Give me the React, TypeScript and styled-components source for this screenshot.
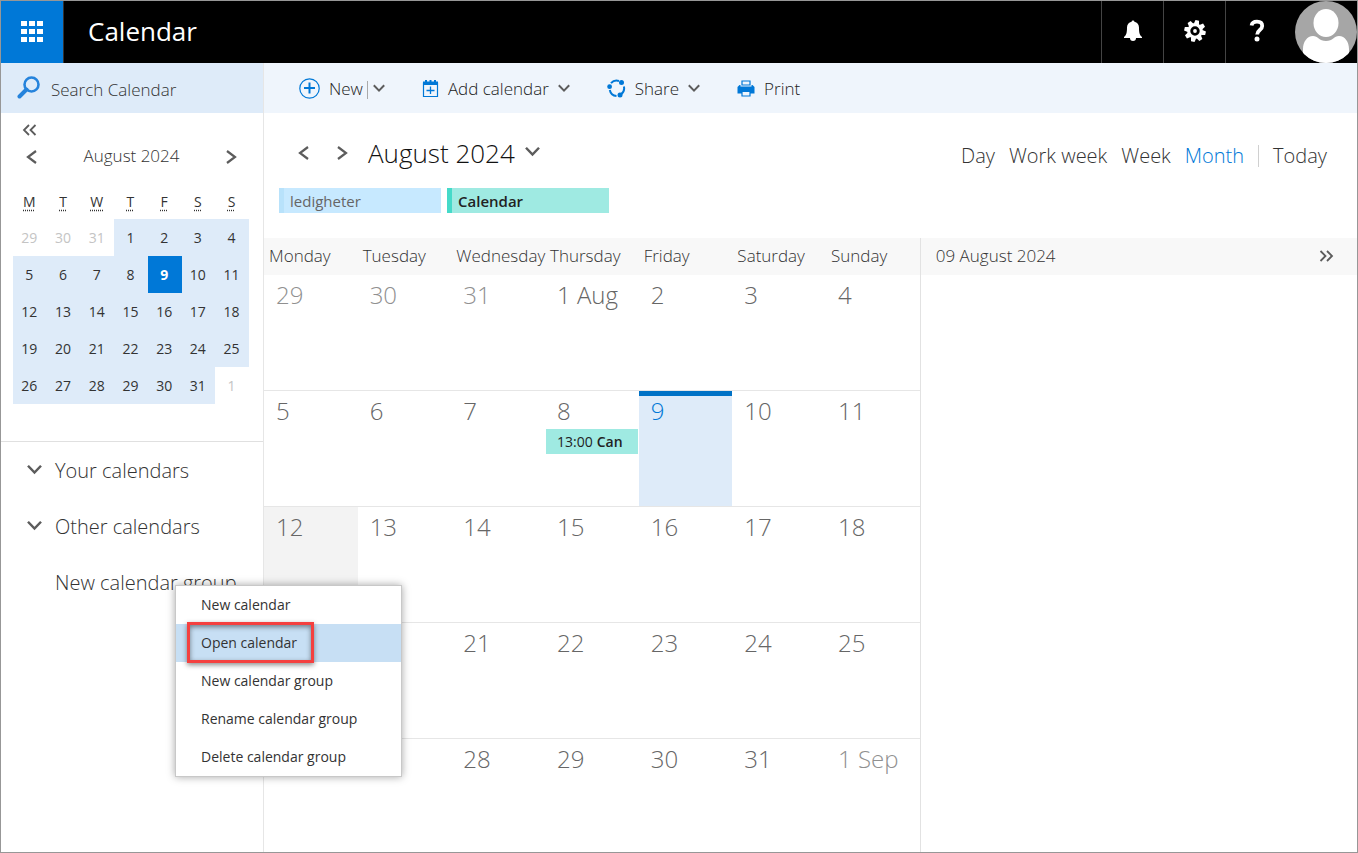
import React from 'react';
import styled, { createGlobalStyle } from 'styled-components';

const GlobalStyle = createGlobalStyle`
  *, *::before, *::after { box-sizing: border-box; }
  body {
    margin: 0;
    background: #fff;
    color: #333;
    font-family: "Open Sans", "Noto Sans", sans-serif;
    font-size: 17px;
    font-weight: 300;
  }
  button, input { font: inherit; color: inherit; }
  svg { display: block; flex: none; }
`;

const Button = styled.button`
  display: flex;
  align-items: center;
  padding: 0;
  border: 0;
  background: none;
  cursor: pointer;
  white-space: nowrap;
`;

const Page = styled.div`
  display: flex;
  flex-direction: column;
  min-height: 100vh;
  border: 1px solid #979797;
`;

/* ---------- top bar ---------- */

const TopBar = styled.header`
  display: flex;
  align-items: center;
  height: 62px;
  background: #000;
  color: #fff;
`;

const Launcher = styled(Button)`
  justify-content: center;
  width: 63px;
  height: 100%;
  padding-bottom: 1px;
  background: #0078d7;
  border-right: 1px solid #333;
`;

const AppTitle = styled.h1`
  flex: 1;
  margin: 0;
  padding: 0 0 2px 24px;
  font-size: 26px;
  font-weight: 400;
  line-height: 58px;
`;

const TopAction = styled(Button)`
  justify-content: center;
  width: 62px;
  height: 100%;
  padding-bottom: 2px;
  border-left: 1px solid #444;
`;

const Avatar = styled(Button)`
  margin-left: 8px;
`;

/* ---------- page body ---------- */

const Body = styled.div`
  display: flex;
  flex: 1;
`;

const Sidebar = styled.aside`
  display: flex;
  flex-direction: column;
  flex: none;
  width: 263px;
  border-right: 1px solid #e6e6e6;
`;

const SearchBox = styled.label`
  display: flex;
  align-items: center;
  gap: 10px;
  height: 50px;
  padding: 0 16px;
  background: #deebf9;
`;

const SearchInput = styled.input`
  flex: 1;
  min-width: 0;
  height: 30px;
  padding: 2px 0 0;
  border: 0;
  outline: 0;
  background: none;
  &::placeholder { color: #333; opacity: 1; }
`;

const CollapseRow = styled.div`
  display: flex;
  height: 30px;
  padding: 4px 0 0 21px;
`;

const MiniHeader = styled.div`
  display: flex;
  align-items: center;
  justify-content: space-between;
  height: 28px;
  margin-bottom: 14px;
  padding: 0 26px 0 25px;
  line-height: 24px;
  span { padding-bottom: 2px; }
`;

const MiniMonth = styled.div`
  padding: 0 14px 37px 12px;
  border-bottom: 1px solid #e0e0e0;
`;

const MiniTable = styled.table`
  width: 100%;
  table-layout: fixed;
  border-spacing: 0;
  text-align: center;
  font-size: 14px;
`;

const MiniWeekday = styled.th`
  height: 34px;
  padding: 0 1px 2px 0;
  font-weight: 400;
  abbr { text-decoration: underline dotted; text-underline-offset: 3px; }
`;

type MiniKind = 'in' | 'out' | 'today';

const MiniDay = styled.td<{ $kind: MiniKind }>`
  height: 37px;
  padding: 0 1px 1px 0;
  font-weight: ${p => (p.$kind === 'today' ? 700 : 400)};
  color: ${p => ({ in: '#333', out: '#c4c4c4', today: '#fff' })[p.$kind]};
  background: ${p => ({ in: '#deebf9', out: 'none', today: '#0078d7' })[p.$kind]};
`;

const GroupList = styled.ul`
  margin: 0;
  padding: 0;
  list-style: none;
`;

const GroupItem = styled.li`
  position: relative;
`;

const GroupButton = styled(Button)`
  gap: 13px;
  width: 100%;
  height: 56px;
  padding-left: 26px;
  font-size: 20px;
`;

const ChevronSlot = styled.span`
  width: 15px;
`;

/* ---------- context menu ---------- */

const Menu = styled.ul`
  position: absolute;
  z-index: 2;
  top: 31px;
  left: 174px;
  width: 227px;
  margin: 0;
  padding: 0;
  list-style: none;
  background: #fff;
  border: 1px solid #c8c8c8;
  box-shadow: 0 0 8px rgba(0, 0, 0, 0.35);
`;

const MenuItem = styled.li<{ $active?: boolean }>`
  position: relative;
  background: ${p => (p.$active ? '#c7dff4' : '#fff')};
  z-index: ${p => (p.$active ? 1 : 0)};
`;

const MenuButton = styled(Button)`
  width: 100%;
  height: 38px;
  padding: 0 0 2px 25px;
  font-size: 14px;
  font-weight: 400;
`;

const Callout = styled.span`
  position: absolute;
  top: -2px;
  bottom: -1px;
  left: 11px;
  width: 127px;
  border: 3px solid #f4403f;
  box-shadow: 0 2px 5px rgba(0, 0, 0, 0.45), inset 0 2px 5px rgba(0, 0, 0, 0.45);
  pointer-events: none;
`;

/* ---------- main area ---------- */

const Main = styled.main`
  display: flex;
  flex-direction: column;
  flex: 1;
  min-width: 0;
`;

const Toolbar = styled.div`
  display: flex;
  align-items: center;
  gap: 37px;
  height: 50px;
  padding: 1px 0 0 35px;
  background: #eff5fc;
`;

const Tool = styled(Button)`
  gap: 9px;
  color: #222;
`;

const ToolDivider = styled.span`
  width: 1px;
  height: 18px;
  margin: 3px -4px 0 -5px;
  background: #aaa;
`;

const NavRow = styled.div`
  display: flex;
  align-items: center;
  height: 75px;
  padding: 4px 30px 0 34px;
`;

const NavButton = styled(Button)`
  margin-right: 28px;
`;

const MonthTitle = styled(Button)`
  gap: 10px;
  margin-left: -8px;
  margin-right: auto;
  font-size: 26px;
  color: #111;
`;

const Views = styled.nav`
  display: flex;
  align-items: center;
  gap: 14px;
  padding-top: 6px;
`;

const ViewLink = styled.a<{ $active?: boolean }>`
  font-size: 20px;
  text-decoration: none;
  white-space: nowrap;
  color: ${p => (p.$active ? '#0078d7' : '#333')};
`;

const ViewDivider = styled.span`
  width: 1px;
  height: 22px;
  background: #d0d0d0;
`;

const CalendarTabs = styled.div`
  display: flex;
  gap: 6px;
  padding: 0 15px 25px;
`;

const CalendarTab = styled(Button)<{ $active?: boolean }>`
  width: 162px;
  height: 25px;
  padding: 1px 0 0 6px;
  font-size: 15px;
  font-weight: ${p => (p.$active ? 600 : 400)};
  color: ${p => (p.$active ? '#222' : '#666')};
  background: ${p => (p.$active ? '#9feae2' : '#c7e9ff')};
  border-left: 5px solid ${p => (p.$active ? '#45dac9' : '#b8e2fb')};
`;

const Columns = styled.div`
  display: flex;
  flex: 1;
`;

const MonthTable = styled.table`
  width: 60%;
  height: 100%;
  table-layout: fixed;
  border-spacing: 0;
`;

const Weekday = styled.th`
  height: 37px;
  padding: 0 0 2px 5px;
  background: #f8f8f8;
  text-align: left;
  font-weight: 300;
`;

type DayKind = 'in' | 'out' | 'today' | 'hover';

const Day = styled.td<{ $kind: DayKind }>`
  height: 116px;
  padding: 1px 0 0;
  vertical-align: top;
  border-bottom: 1px solid #e6e6e6;
  background: ${p => ({ in: 'none', out: 'none', today: '#deebf9', hover: '#f3f3f3' })[p.$kind]};
  box-shadow: ${p => (p.$kind === 'today' ? 'inset 0 5px #0072c6' : 'none')};
  color: ${p => ({ in: '#666', out: '#909090', today: '#0078d7', hover: '#666' })[p.$kind]};
  tr:last-child > & { height: auto; border-bottom: 0; }
`;

const DayNumber = styled.div`
  padding-left: 12px;
  font-size: 24px;
  line-height: 37px;
`;

const EventButton = styled(Button)`
  gap: 4px;
  width: calc(100% - 2px);
  height: 25px;
  margin-left: 1px;
  padding-left: 11px;
  font-size: 14px;
  font-weight: 400;
  color: #222;
  background: #9feae2;
  strong { font-weight: 600; }
`;

const Agenda = styled.section`
  width: 40%;
  border-left: 1px solid #e2e2e2;
`;

const AgendaHeader = styled.header`
  display: flex;
  align-items: center;
  justify-content: space-between;
  height: 37px;
  padding: 0 23px 2px 15px;
  background: #f8f8f8;
`;

const AgendaTitle = styled.h2`
  margin: 0;
  font-size: 17px;
  font-weight: 300;
`;

/* ---------- icons ---------- */

const GREY = '#5c5c5c';
const BLUE = '#0078d7';

const ChevronDown = ({ size = 12 }: { size?: number }) => (
  <svg width={size} height={size} viewBox="0 0 12 12" fill="none" stroke={GREY} strokeWidth="2">
    <path d="M.8 2.2 6 7.6l5.2-5.4" />
  </svg>
);

const Angle = ({ right }: { right?: boolean }) => (
  <svg width="11" height="14" viewBox="0 0 11 14" fill="none" stroke={GREY} strokeWidth="2.2">
    <path d={right ? 'M1 1l8 6-8 6' : 'M10 1 2 7l8 6'} />
  </svg>
);

const DoubleAngle = ({ right }: { right?: boolean }) => (
  <svg width="15" height="12" viewBox="0 0 15 12" fill="none" stroke={GREY} strokeWidth="1.8">
    <path d={right ? 'M1.5 1l5 5-5 5M8 1l5 5-5 5' : 'M7 1 2 6l5 5M13.500 1l-5 5 5 5'} />
  </svg>
);

const WaffleIcon = () => (
  <svg width="22" height="22" viewBox="0 0 22 22" fill="#fff">
    {[0, 8, 16].map(y => [0, 8, 16].map(x => <rect key={`${x}-${y}`} x={x} y={y} width="6" height="5" />))}
  </svg>
);

const BellIcon = () => (
  <svg width="20" height="22" viewBox="0 0 20 22" fill="#fff">
    <path d="M8.600 1.800a1.400 1.400 0 0 1 2.800 0c2.900.6 4.600 2.800 4.600 5.800 0 5 .6 7.600 3 9.400v1H1v-1c2.400-1.800 3-4.400 3-9.400 0-3 1.700-5.200 4.600-5.800z" />
    <path d="M7 18h6a3 3 0 0 1-6 0z" />
  </svg>
);

const GearIcon = () => (
  <svg width="22" height="22" viewBox="-11 -11 22 22" fill="#fff">
    {[0, 45, 90, 135, 180, 225, 270, 315].map(a => (
      <path key={a} d="M-2.600-7-1.800-10.800h3.600L2.600-7z" transform={`rotate(${a + 12})`} />
    ))}
    <circle r="6.300" fill="none" stroke="#fff" strokeWidth="3.200" />
    <circle r="1.900" />
  </svg>
);

const HelpIcon = () => (
  <svg width="18" height="24" viewBox="0 0 18 24">
    <path d="M3.600 6.500C4 3.800 6 2.600 9 2.600c3.300 0 5.200 1.600 5.200 4.300 0 4.300-5 3.900-5 8.600" fill="none" stroke="#fff" strokeWidth="3.800" />
    <circle cx="9" cy="20" r="2.500" fill="#fff" />
  </svg>
);

const PersonIcon = () => (
  <svg width="62" height="62" viewBox="0 0 62 62">
    <defs>
      <clipPath id="avatar-clip"><circle cx="31" cy="31" r="31" /></clipPath>
    </defs>
    <g clipPath="url(#avatar-clip)">
      <rect width="62" height="62" fill="#a6a6a6" />
      <path d="M8 62V48c0-7 4-13 10-13 5 0 6 5 13 5s8-5 13-5c6 0 10 6 10 13v14z" fill="#fff" />
      <ellipse cx="31" cy="22" rx="12.500" ry="14" fill="#fff" />
    </g>
  </svg>
);

const SearchIcon = () => (
  <svg width="24" height="24" viewBox="0 0 24 24" fill="none" stroke="#2583dc">
    <circle cx="14.500" cy="8.500" r="7" strokeWidth="2.600" />
    <path d="M9.500 13.500 2.500 20.500" strokeWidth="4" strokeLinecap="round" />
  </svg>
);

const NewIcon = () => (
  <svg width="21" height="21" viewBox="0 0 21 21" fill="none" stroke={BLUE}>
    <circle cx="10.500" cy="10.500" r="9.700" strokeWidth="1.200" />
    <path d="M10.500 4.500v11M5 10h11" strokeWidth="2" />
  </svg>
);

const AddCalendarIcon = () => (
  <svg width="17" height="18" viewBox="0 0 17 18">
    <path d="M1.500 3h14v13.500h-14z" fill="none" stroke={BLUE} strokeWidth="1.200" />
    <path d="M1 1.500h2V0h2v1.500h2.500V0h2v1.500H12V0h2v1.500h2V5H1z" fill={BLUE} />
    <path d="M8.500 6.500v7.500M4.500 10.500h8" stroke={BLUE} strokeWidth="1.300" />
  </svg>
);

const ShareIcon = () => (
  <svg width="19" height="19" viewBox="0 0 19 19" fill="none" stroke={BLUE} strokeWidth="2">
    <path d="M4 4.200a7.500 7.500 0 0 1 8-2.200M16.900 7.500a7.500 7.500 0 0 1-2.600 7.600M9.500 17A7.500 7.500 0 0 1 2.800 11" />
    <g fill={BLUE} stroke="none">
      <circle cx="14.500" cy="3.500" r="2.500" />
      <circle cx="2.600" cy="7.700" r="2.400" />
      <circle cx="13" cy="16" r="2.500" />
    </g>
  </svg>
);

const PrintIcon = () => (
  <svg width="18" height="17" viewBox="0 0 18 17">
    <path d="M5 1h8v4H5z" fill="none" stroke={BLUE} strokeWidth="1.200" />
    <path d="M2.500 5h1v1.500h11V5h1L17.500 7v6.500h-17V7z" fill={BLUE} />
    <path d="M5 11.500h8V16H5z" fill="#eff5fc" stroke={BLUE} strokeWidth="1.200" />
  </svg>
);

/* ---------- data ---------- */

const WEEKDAYS = ['Monday', 'Tuesday', 'Wednesday', 'Thursday', 'Friday', 'Saturday', 'Sunday'];
const VIEWS = ['Day', 'Work week', 'Week', 'Month'];
const MENU = ['New calendar', 'Open calendar', 'New calendar group', 'Rename calendar group', 'Delete calendar group'];

/* August 2024 starts on a Thursday: the grid opens with 29 July. */
const CELLS = Array.from({ length: 35 }, (_, i) => {
  const offset = i - 2;
  if (offset < 1) return { day: 31 + offset, inMonth: false };
  if (offset > 31) return { day: offset - 31, inMonth: false };
  return { day: offset, inMonth: true };
});
const WEEKS = [0, 1, 2, 3, 4].map(w => CELLS.slice(w * 7, w * 7 + 7));
type Cell = (typeof CELLS)[number];

const miniKind = (c: Cell): MiniKind => (!c.inMonth ? 'out' : c.day === 9 ? 'today' : 'in');
const dayKind = (c: Cell): DayKind =>
  !c.inMonth ? 'out' : c.day === 9 ? 'today' : c.day === 12 ? 'hover' : 'in';
const dayLabel = (c: Cell) => (c.day === 1 ? (c.inMonth ? '1 Aug' : '1 Sep') : c.day);

export default function App() {
  return (
    <>
      <GlobalStyle />
      <Page>
        <TopBar>
          <Launcher aria-label="App launcher"><WaffleIcon /></Launcher>
          <AppTitle>Calendar</AppTitle>
          <TopAction aria-label="Notifications"><BellIcon /></TopAction>
          <TopAction aria-label="Settings"><GearIcon /></TopAction>
          <TopAction aria-label="Help"><HelpIcon /></TopAction>
          <Avatar aria-label="Account"><PersonIcon /></Avatar>
        </TopBar>
        <Body>
          <Sidebar>
            <SearchBox>
              <SearchIcon />
              <SearchInput type="text" placeholder="Search Calendar" aria-label="Search Calendar" />
            </SearchBox>
            <CollapseRow>
              <Button aria-label="Collapse"><DoubleAngle /></Button>
            </CollapseRow>
            <MiniHeader>
              <Button aria-label="Previous month"><Angle /></Button>
              <span>August 2024</span>
              <Button aria-label="Next month"><Angle right /></Button>
            </MiniHeader>
            <MiniMonth>
              <MiniTable>
                <thead>
                  <tr>
                    {WEEKDAYS.map(d => (
                      <MiniWeekday key={d}><abbr title={d}>{d[0]}</abbr></MiniWeekday>
                    ))}
                  </tr>
                </thead>
                <tbody>
                  {WEEKS.map((week, w) => (
                    <tr key={w}>
                      {week.map((c, i) => <MiniDay key={i} $kind={miniKind(c)}>{c.day}</MiniDay>)}
                    </tr>
                  ))}
                </tbody>
              </MiniTable>
            </MiniMonth>
            <GroupList>
              <GroupItem>
                <GroupButton><ChevronSlot><ChevronDown size={15} /></ChevronSlot>Your calendars</GroupButton>
              </GroupItem>
              <GroupItem>
                <GroupButton><ChevronSlot><ChevronDown size={15} /></ChevronSlot>Other calendars</GroupButton>
              </GroupItem>
              <GroupItem>
                <GroupButton><ChevronSlot />New calendar group</GroupButton>
                <Menu role="menu">
                  {MENU.map(label => {
                    const active = label === 'Open calendar';
                    return (
                      <MenuItem key={label} role="none" $active={active}>
                        <MenuButton role="menuitem">{label}</MenuButton>
                        {active && <Callout />}
                      </MenuItem>
                    );
                  })}
                </Menu>
              </GroupItem>
            </GroupList>
          </Sidebar>
          <Main>
            <Toolbar>
              <Tool><NewIcon />New<ToolDivider /><ChevronDown /></Tool>
              <Tool><AddCalendarIcon />Add calendar<ChevronDown /></Tool>
              <Tool><ShareIcon />Share<ChevronDown /></Tool>
              <Tool><PrintIcon />Print</Tool>
            </Toolbar>
            <NavRow>
              <NavButton aria-label="Previous month"><Angle /></NavButton>
              <NavButton aria-label="Next month"><Angle right /></NavButton>
              <MonthTitle>August 2024<ChevronDown size={15} /></MonthTitle>
              <Views>
                {VIEWS.map(v => <ViewLink key={v} href="#" $active={v === 'Month'}>{v}</ViewLink>)}
                <ViewDivider />
                <ViewLink href="#">Today</ViewLink>
              </Views>
            </NavRow>
            <CalendarTabs>
              <CalendarTab>ledigheter</CalendarTab>
              <CalendarTab $active>Calendar</CalendarTab>
            </CalendarTabs>
            <Columns>
              <MonthTable>
                <thead>
                  <tr>{WEEKDAYS.map(d => <Weekday key={d}>{d}</Weekday>)}</tr>
                </thead>
                <tbody>
                  {WEEKS.map((week, w) => (
                    <tr key={w}>
                      {week.map((c, i) => (
                        <Day key={i} $kind={dayKind(c)}>
                          <DayNumber>{dayLabel(c)}</DayNumber>
                          {c.inMonth && c.day === 8 && (
                            <EventButton><span>13:00</span><strong>Can</strong></EventButton>
                          )}
                        </Day>
                      ))}
                    </tr>
                  ))}
                </tbody>
              </MonthTable>
              <Agenda>
                <AgendaHeader>
                  <AgendaTitle>09 August 2024</AgendaTitle>
                  <Button aria-label="Hide agenda"><DoubleAngle right /></Button>
                </AgendaHeader>
              </Agenda>
            </Columns>
          </Main>
        </Body>
      </Page>
    </>
  );
}
